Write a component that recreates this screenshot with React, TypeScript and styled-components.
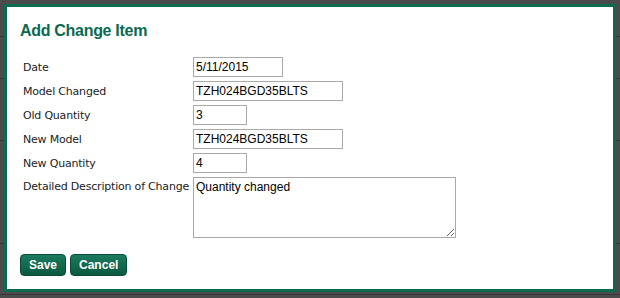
import { Fragment } from "react";
import styled, { createGlobalStyle } from "styled-components";

const GlobalStyle = createGlobalStyle`
  html, body {
    margin: 0;
    padding: 0;
    background: #4b4b4b;
  }
  body {
    width: 620px;
    height: 298px;
    overflow: hidden;
    position: relative;
  }
`;

const Backdrop = styled.div`
  display: flex;
  flex-direction: column;
  width: 620px;
  height: 298px;
`;

const BackRow = styled.div<{ $h: number }>`
  height: ${(p) => p.$h}px;
  border-bottom: 1px solid #363636;
  background: #4b4b4b;
`;

const Dialog = styled.div`
  position: absolute;
  left: 4px;
  top: 4px;
  width: 612px;
  height: 288px;
  box-sizing: border-box;
  border: 3px solid #0b6b50;
  background: #fff;
  padding: 14px 13px 0;
  display: flex;
  flex-direction: column;
`;

const Title = styled.h2`
  margin: 0 0 17px;
  font-family: "Liberation Sans", Arial, sans-serif;
  font-size: 16px;
  line-height: 19px;
  font-weight: bold;
  letter-spacing: -0.3px;
  color: #0a6a4f;
`;

const Form = styled.div`
  display: grid;
  grid-template-columns: 173px auto;
  row-gap: 4px;
  justify-items: start;
`;

const Label = styled.label<{ $top?: boolean }>`
  align-self: ${(p) => (p.$top ? "start" : "center")};
  padding: ${(p) => (p.$top ? "3px 0 0 3px" : "0 0 0 3px")};
  font-family: "DejaVu Sans", Verdana, sans-serif;
  font-size: 11px;
  letter-spacing: -0.2px;
  color: #222;
`;

const TextInput = styled.input<{ $w: number }>`
  width: ${(p) => p.$w}px;
  height: 20px;
  box-sizing: border-box;
  margin: 0;
  padding: 0 2px;
  border: 1px solid #a9a9a9;
  font-family: "Liberation Sans", Arial, sans-serif;
  font-size: 12px;
  color: #000;
  outline: none;
`;

const TextArea = styled.textarea`
  width: 263px;
  height: 61px;
  box-sizing: border-box;
  margin: 0;
  padding: 2px 2px;
  border: 1px solid #a9a9a9;
  font-family: "Liberation Sans", Arial, sans-serif;
  font-size: 12px;
  color: #000;
  outline: none;
`;

const Actions = styled.div`
  display: flex;
  gap: 4px;
  margin-top: 16px;
`;

const Button = styled.button`
  height: 22px;
  padding: 0 8px;
  border: 1px solid #0a4c39;
  border-radius: 4px;
  background: linear-gradient(#1b7b5e, #0a5940);
  color: #fff;
  font-family: "Liberation Sans", Arial, sans-serif;
  font-size: 12px;
  font-weight: bold;
  cursor: pointer;
`;

const rows = [36, 41, 61, 102, 50];

const fields = [
  { label: "Date", value: "5/11/2015", w: 90 },
  { label: "Model Changed", value: "TZH024BGD35BLTS", w: 150 },
  { label: "Old Quantity", value: "3", w: 54 },
  { label: "New Model", value: "TZH024BGD35BLTS", w: 150 },
  { label: "New Quantity", value: "4", w: 54 },
];

export default function App() {
  return (
    <>
      <GlobalStyle />
      <Backdrop>
        {rows.map((h, i) => (
          <BackRow key={i} $h={h} />
        ))}
      </Backdrop>
      <Dialog>
        <Title>Add Change Item</Title>
        <Form>
          {fields.map((f) => (
            <Fragment key={f.label}>
              <Label>{f.label}</Label>
              <TextInput $w={f.w} defaultValue={f.value} />
            </Fragment>
          ))}
          <Label $top>Detailed Description of Change</Label>
          <TextArea defaultValue="Quantity changed" />
        </Form>
        <Actions>
          <Button>Save</Button>
          <Button>Cancel</Button>
        </Actions>
      </Dialog>
    </>
  );
}
